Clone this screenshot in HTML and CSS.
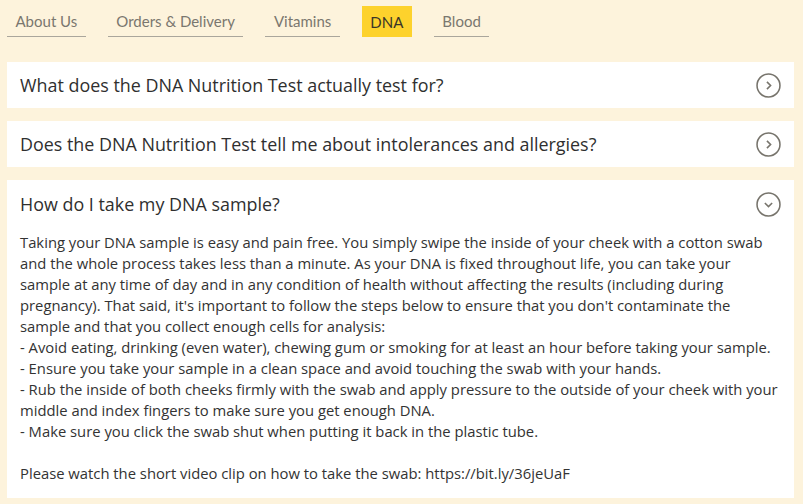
FILE: index.html
```html
<!DOCTYPE html>
<html>
<head>
<meta charset="utf-8">
<link rel="stylesheet" href="styles.css">
</head>
<body>
<nav class="tabs">
  <a class="tab">About Us</a>
  <a class="tab">Orders &amp; Delivery</a>
  <a class="tab">Vitamins</a>
  <a class="tab active">DNA</a>
  <a class="tab">Blood</a>
</nav>
<div class="faq">
  <div class="item">
    <div class="q"><span>What does the DNA Nutrition Test actually test for?</span>
      <svg class="ico" viewBox="0 0 24 24"><circle cx="12" cy="12" r="11" /><path d="M10.5 8.5 L14 12 L10.5 15.5" /></svg>
    </div>
  </div>
  <div class="item">
    <div class="q"><span>Does the DNA Nutrition Test tell me about intolerances and allergies?</span>
      <svg class="ico" viewBox="0 0 24 24"><circle cx="12" cy="12" r="11" /><path d="M10.5 8.5 L14 12 L10.5 15.5" /></svg>
    </div>
  </div>
  <div class="item open">
    <div class="q"><span>How do I take my DNA sample?</span>
      <svg class="ico" viewBox="0 0 24 24"><circle cx="12" cy="12" r="11" /><path d="M8.5 10.5 L12 14 L15.5 10.5" /></svg>
    </div>
    <div class="a">
      <p>Taking your DNA sample is easy and pain free. You simply swipe the inside of your cheek with a cotton swab and the whole process takes less than a minute. As your DNA is fixed throughout life, you can take your sample at any time of day and in any condition of health without affecting the results (including during pregnancy). That said, it's important to follow the steps below to ensure that you don't contaminate the sample and that you collect enough cells for analysis:<br>- Avoid eating, drinking (even water), chewing gum or smoking for at least an hour before taking your sample.<br>- Ensure you take your sample in a clean space and avoid touching the swab with your hands.<br>- Rub the inside of both cheeks firmly with the swab and apply pressure to the outside of your cheek with your middle and index fingers to make sure you get enough DNA.<br>- Make sure you click the swab shut when putting it back in the plastic tube.</p>
      <p>Please watch the short video clip on how to take the swab: https://bit.ly/36jeUaF</p>
    </div>
  </div>
</div>
</body>
</html>
```
FILE: styles.css
```css
html, body {
  margin: 0;
  padding: 0;
  background: #fdf3dc;
}
body {
  font-family: "Open Sans", "Liberation Sans", sans-serif;
  color: #333;
  padding: 6px 9px 0 7px;
}
.tabs {
  display: flex;
  gap: 22px;
  height: 31px;
}
.tab {
  display: flex;
  align-items: center;
  padding: 0 8.5px;
  font-family: "Lato", "Liberation Sans", sans-serif;
  font-size: 15px;
  color: #7a776f;
  border-bottom: 1.5px solid #aaa69c;
  box-sizing: border-box;
}
.tab.active {
  background: #fdd22c;
  border-bottom: none;
  color: #3a3528;
}
.faq {
  margin-top: 25px;
  display: flex;
  flex-direction: column;
  gap: 13px;
}
.item {
  background: #fff;
}
.q {
  display: flex;
  align-items: center;
  justify-content: space-between;
  height: 46px;
  padding: 0 13px;
  font-size: 17.9px;
  color: #2f2f2f;
}
.ico {
  width: 25px;
  height: 25px;
  flex: none;
  fill: none;
  stroke: #77746c;
  stroke-width: 1.5;
}
.open .q {
  height: 48px;
}
.a {
  padding: 4px 13px 14px;
  font-size: 14.8px;
  line-height: 21px;
  color: #333;
}
.a p {
  margin: 0 0 21px;
}
.a p:last-child {
  margin: 0;
}
```
